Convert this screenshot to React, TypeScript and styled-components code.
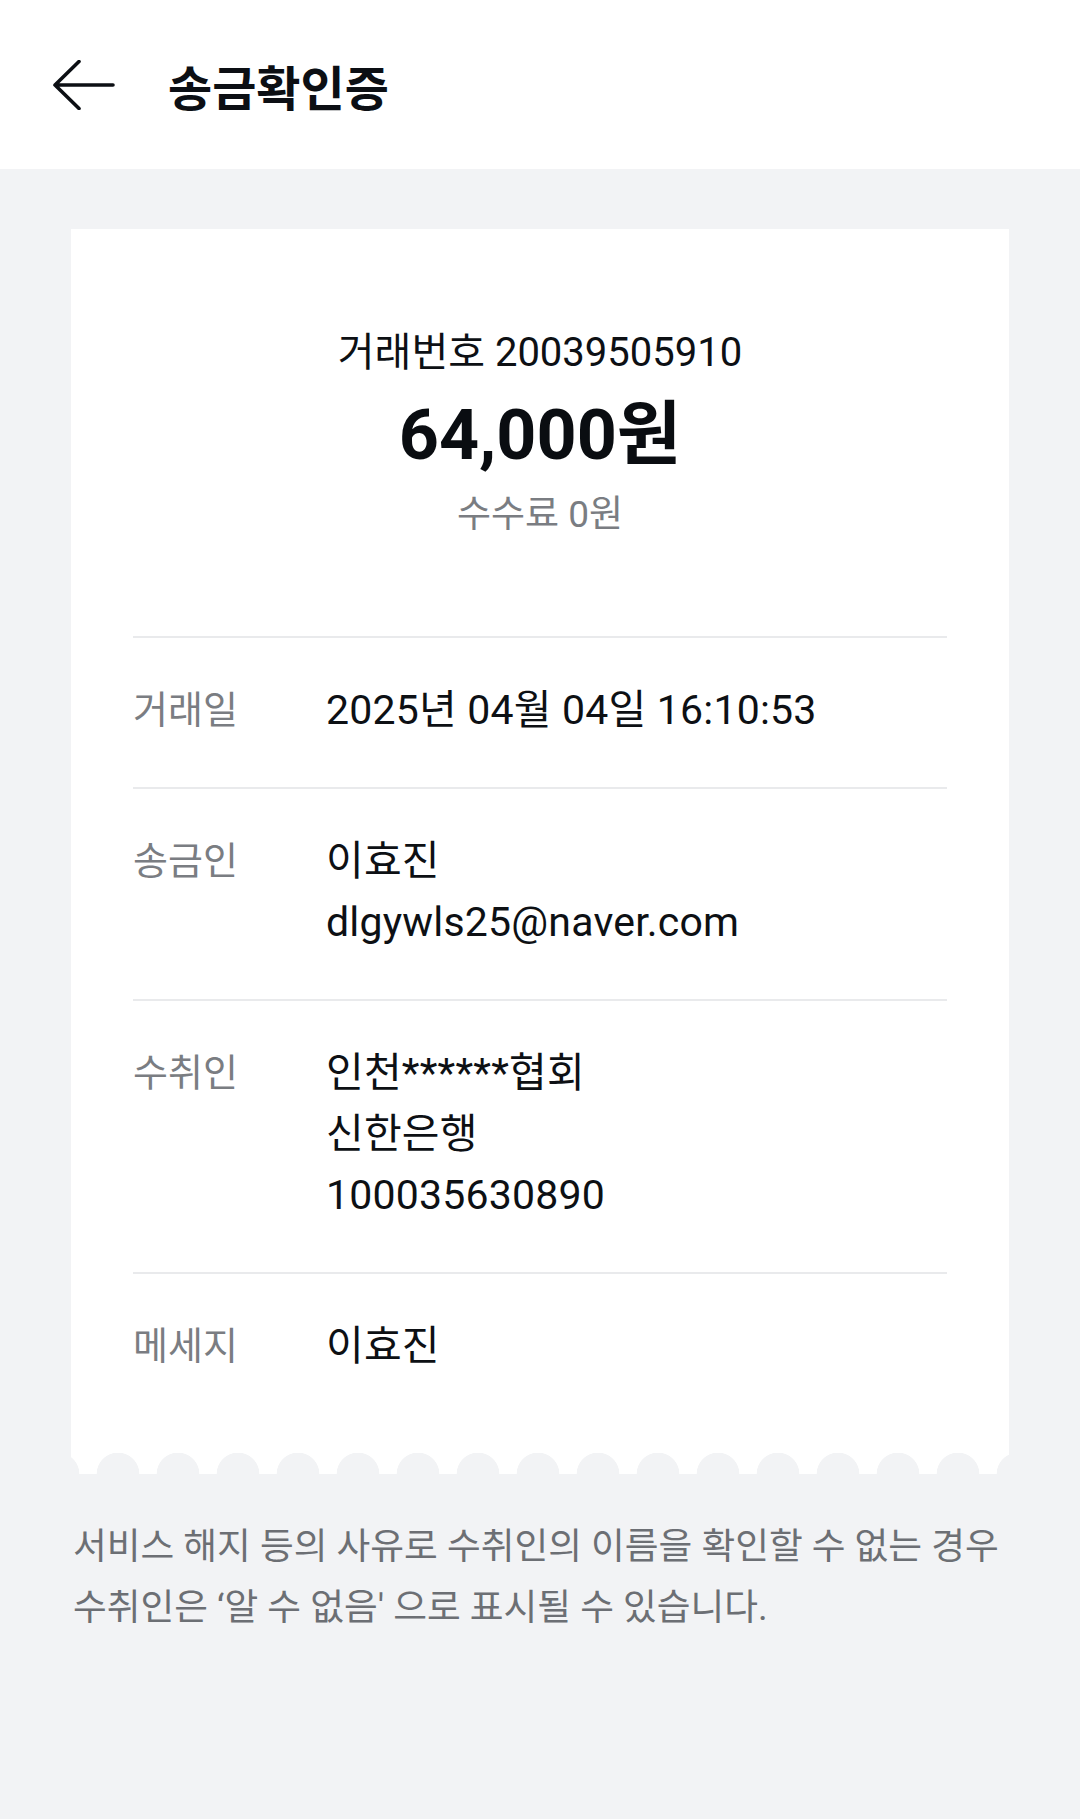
import React from 'react'
import styled, { createGlobalStyle } from 'styled-components'

const GlobalStyle = createGlobalStyle`
  html, body {
    margin: 0;
    padding: 0;
    background: #f2f3f5;
  }
  body {
    font-family: Roboto, 'Noto Sans CJK KR', sans-serif;
    color: #0d1014;
    word-break: keep-all;
    -webkit-font-smoothing: antialiased;
  }
`

const Page = styled.div`
  min-height: 100vh;
  background: #f2f3f5;
`

const Header = styled.header`
  height: 169px;
  display: flex;
  align-items: center;
  background: #fff;
  padding-left: 53px;
  box-sizing: border-box;
`

const BackButton = styled.button`
  display: flex;
  align-items: center;
  justify-content: center;
  width: 62px;
  height: 50px;
  padding: 0;
  border: none;
  background: none;
  margin-right: 53px;
`

const Title = styled.h1`
  margin: 0;
  font-family: 'Noto Sans CJK KR', sans-serif;
  font-size: 48px;
  font-weight: 700;
  line-height: 1;
  color: #0c0f14;
`

const Body = styled.main`
  padding: 60px 71px 0;
`

const Receipt = styled.section`
  background: #fff;
  padding: 96px 62px 76px;
`

const Summary = styled.div`
  display: flex;
  flex-direction: column;
  align-items: center;
  padding-bottom: 96px;
  border-bottom: 2px solid #e9eaec;
`

const TxNumber = styled.div`
  font-size: 40px;
  line-height: 56px;
  color: #0d1014;
`

const Amount = styled.div`
  font-size: 70px;
  font-weight: 700;
  line-height: 84px;
  margin-top: 12px;
  color: #0a0d11;
`

const Fee = styled.div`
  font-size: 37px;
  line-height: 50px;
  margin-top: 13px;
  color: #7a7d82;
`

const Row = styled.div<{ $last?: boolean }>`
  display: grid;
  grid-template-columns: 193px 1fr;
  padding: 42px 0 ${(p) => (p.$last ? '0' : '46px')};
  border-bottom: ${(p) => (p.$last ? 'none' : '2px solid #e9eaec')};
`

const Label = styled.div`
  font-size: 38px;
  line-height: 61px;
  color: #7a7d82;
`

const Value = styled.div`
  font-size: 41px;
  line-height: 61px;
  letter-spacing: 0.2px;
  color: #0d1014;
`

const Scallop = styled.div`
  height: 21px;
  background-image: radial-gradient(circle at 30px 21px, #f2f3f5 21px, #fff 21.6px);
  background-size: 60px 21px;
  background-position: 17px 0;
  background-repeat: repeat-x;
`

const Notice = styled.p`
  margin: 0;
  padding: 42px 2px 0;
  font-size: 36.7px;
  line-height: 61px;
  color: #6c6f74;
`

function BackArrow() {
  return (
    <svg width="62" height="50" viewBox="0 0 62 50" fill="none">
      <path
        d="M60 25H2M26 1.5L2 25l24 23.5"
        stroke="#0c0f14"
        strokeWidth="3.6"
        strokeLinecap="round"
        strokeLinejoin="round"
      />
    </svg>
  )
}

interface InfoRowProps {
  label: string
  lines: string[]
  last?: boolean
}

function InfoRow({ label, lines, last }: InfoRowProps) {
  return (
    <Row $last={last}>
      <Label>{label}</Label>
      <Value>
        {lines.map((line) => (
          <div key={line}>{line}</div>
        ))}
      </Value>
    </Row>
  )
}

export default function App() {
  return (
    <Page>
      <GlobalStyle />
      <Header>
        <BackButton aria-label="뒤로가기">
          <BackArrow />
        </BackButton>
        <Title>송금확인증</Title>
      </Header>
      <Body>
        <Receipt>
          <Summary>
            <TxNumber>거래번호 20039505910</TxNumber>
            <Amount>64,000원</Amount>
            <Fee>수수료 0원</Fee>
          </Summary>
          <InfoRow label="거래일" lines={['2025년 04월 04일 16:10:53']} />
          <InfoRow label="송금인" lines={['이효진', 'dlgywls25@naver.com']} />
          <InfoRow label="수취인" lines={['인천******협회', '신한은행', '100035630890']} />
          <InfoRow label="메세지" lines={['이효진']} last />
        </Receipt>
        <Scallop />
        <Notice>
          서비스 해지 등의 사유로 수취인의 이름을 확인할 수 없는 경우 수취인은 ‘알 수 없음' 으로 표시될 수
          있습니다.
        </Notice>
      </Body>
    </Page>
  )
}
